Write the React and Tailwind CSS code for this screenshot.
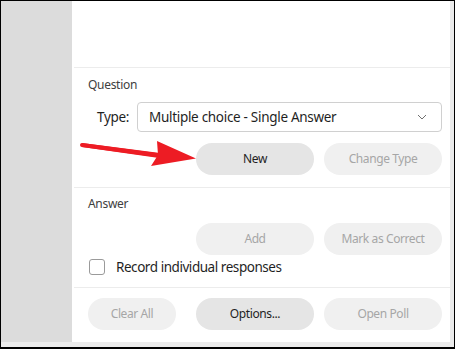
import React from "react";

const font = { fontFamily: '"Noto Sans", "Open Sans", sans-serif' };

function Btn({ children, active, className = "" }) {
  return (
    <div
      className={
        "h-[32px] rounded-full flex items-center justify-center text-[12px] tracking-[-0.4px] " +
        (active ? "bg-[#e5e5e5] text-[#1f1f1f] " : "bg-[#f0f0f0] text-[#a6a6a6] ") +
        className
      }
    >
      {children}
    </div>
  );
}

export default function App() {
  return (
    <div
      className="w-[455px] h-[349px] border-black border-t border-l border-r border-b-2 flex flex-col bg-white"
      style={font}
    >
      <div className="flex h-[341px]">
        <div className="w-[71px] bg-[#dcdcdc]" />
        <div className="flex-1 flex flex-col bg-white relative">
          <div className="h-[66px]" />
          <div className="h-px bg-[#ececec] ml-[2px]" />
          {/* Question */}
          <div className="h-[119px] pl-[16px] pr-[8px] pt-[9px] flex flex-col">
            <div className="h-[16px] leading-[16px] text-[12px] tracking-[-0.3px] text-[#404040]">Question</div>
            <div className="mt-[9px] flex items-center h-[30px]">
              <span className="ml-[9px] text-[13.5px] tracking-[-0.3px] text-[#1f1f1f]">Type:</span>
              <div className="ml-auto w-[305px] h-[30px] border border-[#d0d0d0] rounded-[4px] flex items-center pl-[11px] pr-[14px]">
                <span className="text-[13.5px] tracking-[-0.3px] text-[#1f1f1f]">Multiple choice - Single Answer</span>
                <svg className="ml-auto" width="10" height="6" viewBox="0 0 10 6">
                  <path d="M1 1 L5 5 L9 1" fill="none" stroke="#707070" strokeWidth="1" />
                </svg>
              </div>
            </div>
            <div className="mt-[11px] flex justify-end gap-[10px]">
              <Btn active className="w-[118px]">New</Btn>
              <Btn className="w-[118px]">Change Type</Btn>
            </div>
          </div>
          <div className="h-px bg-[#ececec] ml-[2px]" />
          {/* Answer */}
          <div className="h-[99px] pl-[16px] pr-[8px] pt-[8px] flex flex-col">
            <div className="h-[16px] leading-[16px] text-[12px] tracking-[-0.3px] text-[#404040]">Answer</div>
            <div className="mt-[11px] flex justify-end gap-[10px]">
              <Btn className="w-[118px]">Add</Btn>
              <Btn className="w-[118px]">Mark as Correct</Btn>
            </div>
            <div className="mt-[2px] h-[20px] flex items-center">
              <div className="ml-[1px] w-[16px] h-[16px] rounded-[3px] border border-[#9a9a9a] bg-white" />
              <span className="ml-[11px] text-[13.5px] tracking-[-0.45px] text-[#1f1f1f]">Record individual responses</span>
            </div>
          </div>
          <div className="h-px bg-[#ececec] ml-[2px]" />
          {/* Bottom */}
          <div className="flex-1 pl-[16px] pr-[8px] pt-[10px] flex">
            <Btn className="w-[88px]">Clear All</Btn>
            <Btn active className="w-[118px] ml-[20px]">Options...</Btn>
            <Btn className="w-[118px] ml-[10px]">Open Poll</Btn>
          </div>
          {/* red arrow annotation */}
          <svg
            className="absolute left-0 top-0 pointer-events-none"
            width="378"
            height="341"
            viewBox="72 1 378 341"
          >
            <path d="M82 143 L160 153 L159 158 L82 147 Z" fill="#ed1c24" />
            <path d="M82 145 L160 155.5" stroke="#ed1c24" strokeWidth="4" strokeLinecap="round" />
            <path d="M157 141 L196 158.5 L151 166 L158 155 Z" fill="#ed1c24" />
          </svg>
        </div>
        <div className="w-[4px] bg-[#ebebeb]" />
      </div>
      <div className="h-[5px] bg-[#ebebeb]" />
    </div>
  );
}
